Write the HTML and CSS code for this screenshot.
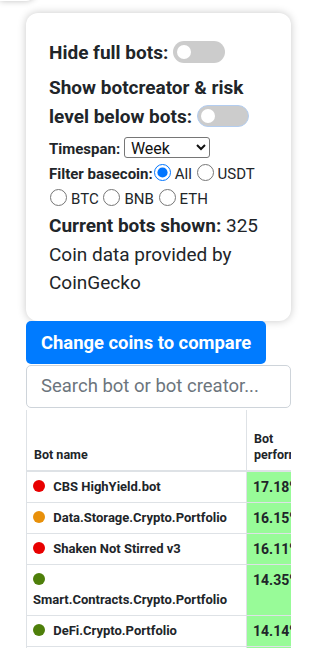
FILE: index.html
```html
<!DOCTYPE html>
<html lang="en">

<head>
    <meta charset="UTF-8">
    <meta name="viewport" content="width=device-width, initial-scale=1.0">
    <title>Bot Performance</title>
    <link rel="stylesheet" href="styles.css">
</head>

<body>

    <div class="prev-card"></div>

    <div class="page">

        <div class="settings-card">
            <div class="setting-line">
                <b>Hide full bots:</b>
                <span class="toggle"><span class="knob"></span></span>
            </div>
            <div class="setting-line">
                <b>Show botcreator &amp; risk level below bots:</b>
                <span class="toggle focused"><span class="knob"></span></span>
            </div>

            <div class="small-line">
                <label for="timespan"><b>Timespan:</b></label>
                <select id="timespan">
                    <option>Week</option>
                    <option>Month</option>
                    <option>Year</option>
                </select>
            </div>
            <div class="small-line">
                <b>Filter basecoin:</b><input type="radio" name="basecoin" id="bcAll" checked><label for="bcAll">All</label>
                <input type="radio" name="basecoin" id="bcUsdt"><label for="bcUsdt">USDT</label>
                <input type="radio" name="basecoin" id="bcBtc"><label for="bcBtc">BTC</label>
                <input type="radio" name="basecoin" id="bcBnb"><label for="bcBnb">BNB</label>
                <input type="radio" name="basecoin" id="bcEth"><label for="bcEth">ETH</label>
            </div>

            <p class="info"><b>Current bots shown:</b> 325</p>
            <p class="info">Coin data provided by CoinGecko</p>
        </div>

        <button class="compare-btn">Change coins to compare</button>
        <input type="text" class="search" placeholder="Search bot or bot creator...">

        <div class="table-wrap">
            <table class="bot-table">
                <thead>
                    <tr>
                        <th class="name-col">Bot name</th>
                        <th class="perf-col">Bot performance</th>
                    </tr>
                </thead>
                <tbody>
                    <tr>
                        <td><span class="dot red"></span> CBS HighYield.bot</td>
                        <td class="perf">17.18%</td>
                    </tr>
                    <tr>
                        <td><span class="dot orange"></span> Data.Storage.Crypto.Portfolio</td>
                        <td class="perf">16.15%</td>
                    </tr>
                    <tr>
                        <td><span class="dot red"></span> Shaken Not Stirred v3</td>
                        <td class="perf">16.11%</td>
                    </tr>
                    <tr>
                        <td><span class="dot green"></span> Smart.Contracts.Crypto.Portfolio</td>
                        <td class="perf">14.35%</td>
                    </tr>
                    <tr>
                        <td><span class="dot green"></span> DeFi.Crypto.Portfolio</td>
                        <td class="perf">14.14%</td>
                    </tr>
                    <tr>
                        <td><span class="dot green"></span> Bitcoin.Mining.Portfolio</td>
                        <td class="perf">13.90%</td>
                    </tr>
                </tbody>
            </table>
        </div>

    </div>

</body>

</html>
```

FILE: styles.css
```css
body {
    font-family: Roboto, "Liberation Sans", sans-serif;
    color: #212529;
    background-color: white;
    margin: 0;
    padding: 0;
    overflow: hidden;
}

.prev-card {
    width: 36px;
    height: 20px;
    margin-top: -19px;
    border-radius: 0 0 10px 0;
    background-color: white;
    box-shadow: 0 0 6px rgba(0, 0, 0, 0.25);
}

.page {
    margin: 0 29px 0 26px;
}

.settings-card {
    margin-top: 12px;
    padding: 25px 20px 23px 23px;
    border-radius: 12px;
    background-color: white;
    box-shadow: 0 0 8px rgba(0, 0, 0, 0.22);
}

.setting-line {
    font-size: 19px;
    line-height: 29px;
    margin-bottom: 6px;
}

.toggle {
    display: inline-block;
    position: relative;
    width: 52px;
    height: 22px;
    border-radius: 11px;
    background-color: #cccccc;
    vertical-align: -4px;
    box-sizing: border-box;
}

.toggle.focused {
    border: 1px solid #b3cdf0;
}

.knob {
    position: absolute;
    left: 4px;
    top: 4px;
    width: 14px;
    height: 14px;
    border-radius: 50%;
    background-color: white;
}

.toggle.focused .knob {
    left: 3px;
    top: 3px;
}

.small-line {
    font-size: 15px;
    line-height: 25px;
}

.small-line select {
    font-family: Roboto, "Liberation Sans", sans-serif;
    font-size: 16px;
    width: 86px;
    height: 21px;
    padding: 0 2px;
    border: 1px solid #767676;
    border-radius: 3px;
    color: #111;
    background-color: white;
}

.small-line input[type="radio"] {
    width: 17px;
    height: 17px;
    margin: 0 4px 0 1px;
    vertical-align: -2px;
}

.info {
    font-size: 19px;
    line-height: 28.5px;
    margin: 0;
}

.compare-btn {
    display: block;
    font-family: Roboto, "Liberation Sans", sans-serif;
    font-size: 18.4px;
    font-weight: bold;
    background-color: #007bff;
    color: white;
    border: none;
    height: 43px;
    padding: 0 15px;
    border-radius: 5px;
    cursor: pointer;
}

.search {
    display: block;
    width: 100%;
    box-sizing: border-box;
    height: 43px;
    margin-top: 1px;
    padding: 0 14px;
    font-family: Roboto, "Liberation Sans", sans-serif;
    font-size: 18.5px;
    border: 1px solid #ced4da;
    border-radius: 5px;
}

.search::placeholder {
    color: #6c757d;
}

.table-wrap {
    margin-top: 2px;
    overflow: hidden;
}

.bot-table {
    table-layout: fixed;
    width: 300px;
    border-collapse: collapse;
    border-left: 1px solid #dee2e6;
}

.bot-table th {
    box-sizing: border-box;
    font-size: 12.5px;
    line-height: 16px;
    text-align: left;
    vertical-align: bottom;
    height: 61px;
    padding: 6px 6px 7px 7px;
    border-bottom: 2px solid #dee2e6;
}

.bot-table th.name-col {
    width: 220px;
    border-right: 1px solid #dee2e6;
}

.bot-table th.perf-col {
    width: 80px;
}

.bot-table td {
    font-size: 13px;
    font-weight: bold;
    line-height: 20px;
    padding: 5px 6px;
    border-bottom: 1px solid #dee2e6;
    border-right: 1px solid #dee2e6;
    vertical-align: top;
}

.bot-table td.perf {
    background-color: #98fb98;
    font-size: 14px;
}

.dot {
    display: inline-block;
    width: 12px;
    height: 12px;
    border-radius: 50%;
    margin-right: 5px;
    vertical-align: -1px;
}

.red {
    background-color: #e80000;
}

.orange {
    background-color: #e8900a;
}

.green {
    background-color: #4e7f0a;
}
```
